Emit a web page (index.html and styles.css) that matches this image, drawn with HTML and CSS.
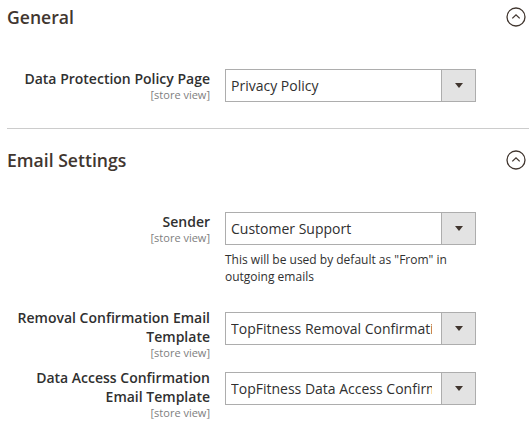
FILE: index.html
```html
<!DOCTYPE html>
<html lang="en">
<head>
    <meta charset="UTF-8">
    <meta name="viewport" content="width=device-width, initial-scale=1.0">
    <title>Privacy Settings</title>
    <link rel="stylesheet" href="styles.css">
</head>
<body>
    <div class="config-page">
        <!-- General -->
        <section class="config-section">
            <div class="section-title">
                <h2>General</h2>
                <svg class="collapse-icon" width="20" height="20" viewBox="0 0 20 20">
                    <circle cx="10" cy="10" r="9" fill="none" stroke="#41362f" stroke-width="1.3"/>
                    <path d="M6.3 11.4 L10 7.8 L13.7 11.4" fill="none" stroke="#41362f" stroke-width="1.3"/>
                </svg>
            </div>

            <div class="fields">
                <div class="field">
                    <div class="field-label">
                        <span class="label-text">Data Protection Policy Page</span>
                        <span class="scope">[store view]</span>
                    </div>
                    <div class="field-control">
                        <div class="select">
                            <span class="select-value">Privacy Policy</span>
                            <span class="select-btn"><i class="arrow"></i></span>
                        </div>
                    </div>
                </div>
            </div>
        </section>

        <!-- Email Settings -->
        <section class="config-section">
            <div class="section-title">
                <h2>Email Settings</h2>
                <svg class="collapse-icon" width="20" height="20" viewBox="0 0 20 20">
                    <circle cx="10" cy="10" r="9" fill="none" stroke="#41362f" stroke-width="1.3"/>
                    <path d="M6.3 11.4 L10 7.8 L13.7 11.4" fill="none" stroke="#41362f" stroke-width="1.3"/>
                </svg>
            </div>

            <div class="fields">
                <div class="field">
                    <div class="field-label">
                        <span class="label-text">Sender</span>
                        <span class="scope">[store view]</span>
                    </div>
                    <div class="field-control">
                        <div class="select">
                            <span class="select-value">Customer Support</span>
                            <span class="select-btn"><i class="arrow"></i></span>
                        </div>
                        <p class="note">This will be used by default as "From" in outgoing emails</p>
                    </div>
                </div>

                <div class="field">
                    <div class="field-label field-label--wrap">
                        <span class="label-text">Removal Confirmation Email Template</span>
                        <span class="scope">[store view]</span>
                    </div>
                    <div class="field-control">
                        <div class="select">
                            <span class="select-value">TopFitness Removal Confirmation</span>
                            <span class="select-btn"><i class="arrow"></i></span>
                        </div>
                    </div>
                </div>

                <div class="field">
                    <div class="field-label field-label--wrap">
                        <span class="label-text">Data Access Confirmation Email Template</span>
                        <span class="scope">[store view]</span>
                    </div>
                    <div class="field-control">
                        <div class="select">
                            <span class="select-value">TopFitness Data Access Confirmation</span>
                            <span class="select-btn"><i class="arrow"></i></span>
                        </div>
                    </div>
                </div>
            </div>
        </section>
    </div>
</body>
</html>
```

FILE: styles.css
```css
/* Variables */
:root {
    --title-color: #41362f;
    --text-color: #303030;
    --scope-color: #808080;
    --border-color: #adadad;
    --divider-color: #cccccc;
    --btn-bg: #e3e3e3;
}

body {
    margin: 0;
    font-family: "Open Sans", "Liberation Sans", sans-serif;
    color: var(--text-color);
    background: #fff;
}

.config-page {
    padding-left: 7px;
}

/* Sections */
.config-section {
    padding: 21px 0 26px;
    border-top: 1px solid var(--divider-color);
}

.config-section:first-child {
    padding-top: 7px;
    border-top: none;
}

.section-title {
    display: flex;
    align-items: center;
    justify-content: space-between;
    padding-right: 3px;
}

.section-title h2 {
    margin: 0;
    font-size: 17.6px;
    font-weight: 600;
    line-height: 20px;
    color: var(--title-color);
}

.collapse-icon {
    display: block;
}

/* Fields */
.fields {
    margin-top: 42px;
}

.field {
    display: grid;
    grid-template-columns: 203px 251px;
    column-gap: 15px;
    align-items: start;
    margin-bottom: 27px;
}

.field:last-child {
    margin-bottom: 0;
}

/* the scope hangs under the label and takes no room in the row */
.field-label {
    position: relative;
    text-align: right;
}

.field-label--wrap {
    margin: -4px 0 -4px;
}

.label-text {
    display: block;
    font-size: 14px;
    font-weight: 600;
    line-height: 19px;
}

.scope {
    position: absolute;
    top: 100%;
    right: 0;
    font-size: 11px;
    line-height: 13px;
    white-space: nowrap;
    color: var(--scope-color);
}

/* Select */
.select {
    display: flex;
    height: 33px;
    box-sizing: border-box;
    border: 1px solid var(--border-color);
    background: #fff;
}

.select-value {
    flex: 1;
    min-width: 0;
    margin: 0 9px 0 5px;
    overflow: hidden;
    white-space: nowrap;
    font-size: 14px;
    line-height: 31px;
}

.select-btn {
    display: flex;
    align-items: center;
    justify-content: center;
    width: 33px;
    border-left: 1px solid var(--border-color);
    background: var(--btn-bg);
}

.arrow {
    width: 0;
    height: 0;
    border-left: 4px solid transparent;
    border-right: 4px solid transparent;
    border-top: 5px solid var(--title-color);
}

.note {
    margin: 7px 0 0;
    font-size: 12px;
    line-height: 16.5px;
}
```
